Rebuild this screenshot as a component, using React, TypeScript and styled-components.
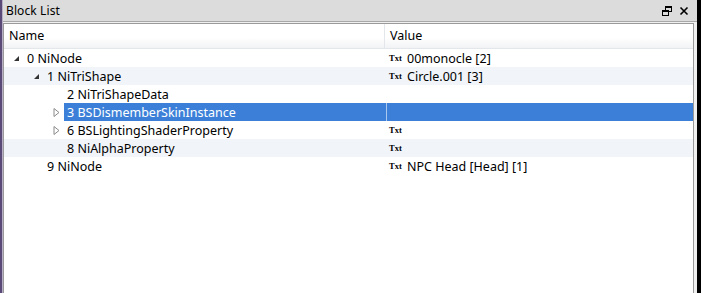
import React from "react";
import styled, { createGlobalStyle } from "styled-components";

const Global = createGlobalStyle`
  html, body { margin: 0; padding: 0; background: #fff; }
  body { font-family: "Noto Sans", "Liberation Sans", sans-serif; }
`;

const Frame = styled.div`
  width: 701px;
  height: 293px;
  display: flex;
  overflow: hidden;
  background: #f0f0f0;
`;

const LeftEdge = styled.div`
  width: 3px;
  flex: none;
  background: linear-gradient(to right, #5a4a78 0, #5a4a78 2px, #b9b0c8 2px);
`;

const RightEdge = styled.div`
  width: 4px;
  flex: none;
  background: #000;
`;

const Dock = styled.div`
  flex: 1;
  display: flex;
  flex-direction: column;
  min-width: 0;
`;

const TitleBar = styled.div`
  height: 21px;
  flex: none;
  display: flex;
  align-items: center;
  padding: 0 6px 0 3px;
  background: #dcdcdc;
  border-bottom: 1px solid #a8a8a8;
  font-size: 12px;
  color: #000;
`;

const Title = styled.span`
  flex: 1;
  letter-spacing: 0.1px;
`;

const TitleButton = styled.span`
  width: 14px;
  height: 14px;
  display: inline-flex;
  align-items: center;
  justify-content: center;
  margin-left: 3px;
`;

const Body = styled.div`
  flex: 1;
  display: flex;
  padding: 1px 3px 0 0;
`;

const Tree = styled.div`
  flex: 1;
  background: #fff;
  border: 1px solid #9a9a9a;
  border-bottom: none;
  display: flex;
  flex-direction: column;
`;

const HeaderRow = styled.div`
  height: 24px;
  display: grid;
  grid-template-columns: 381px 1fr;
  background: linear-gradient(#ffffff 0%, #ffffff 55%, #f2f3f5 100%);
  border-bottom: 1px solid #e3e6ea;
  font-size: 12.5px;
`;

const HeaderCell = styled.div<{ $last?: boolean }>`
  display: flex;
  align-items: center;
  padding-left: 5px;
  padding-bottom: 1px;
  border-right: ${(p) => (p.$last ? "none" : "1px solid #e3e6ea")};
`;

const Rows = styled.div``;

const Row = styled.div<{ $alt?: boolean }>`
  height: 18px;
  display: grid;
  grid-template-columns: 382px 1fr;
  background: ${(p) => (p.$alt ? "#f1f4f9" : "#fff")};
  font-size: 12.5px;
  color: #000;
`;

const NameCell = styled.div<{ $level: number }>`
  display: flex;
  align-items: center;
  padding-left: ${(p) => 6 + p.$level * 20}px;
  white-space: nowrap;
`;

const Expander = styled.span`
  width: 12px;
  height: 18px;
  flex: none;
  display: inline-flex;
  align-items: center;
  justify-content: center;
  margin-right: 2px;
`;

const Label = styled.span<{ $selected?: boolean }>`
  height: 18px;
  display: flex;
  align-items: center;
  padding-left: 3px;
  flex: 1;
  background: ${(p) => (p.$selected ? "#3b7fd8" : "transparent")};
  color: ${(p) => (p.$selected ? "#fff" : "#000")};
`;

const ValueCell = styled.div<{ $selected?: boolean }>`
  display: flex;
  align-items: center;
  padding-left: 3px;
  white-space: nowrap;
  background: ${(p) => (p.$selected ? "#3b7fd8" : "transparent")};
  box-shadow: ${(p) => (p.$selected ? "inset 1px 0 0 #a9c7ef" : "none")};
`;

const TxtTag = styled.span`
  font-family: "Liberation Serif", serif;
  font-weight: bold;
  font-size: 8.5px;
  width: 15px;
  margin-right: 3px;
  flex: none;
`;

const Expanded = () => (
  <svg width="7" height="7" viewBox="0 0 7 7">
    <polygon points="6,1 6,6 1,6" fill="#333" />
  </svg>
);

const Collapsed = () => (
  <svg width="7" height="9" viewBox="0 0 7 9">
    <polygon points="1,0.5 6,4.5 1,8.5" fill="none" stroke="#8a8a8a" strokeWidth="1" />
  </svg>
);

type Item = {
  level: number;
  name: string;
  value?: string;
  txt?: boolean;
  exp?: "open" | "closed";
  selected?: boolean;
};

const items: Item[] = [
  { level: 0, name: "0 NiNode", value: "00monocle [2]", txt: true, exp: "open" },
  { level: 1, name: "1 NiTriShape", value: "Circle.001 [3]", txt: true, exp: "open" },
  { level: 2, name: "2 NiTriShapeData" },
  { level: 2, name: "3 BSDismemberSkinInstance", exp: "closed", selected: true },
  { level: 2, name: "6 BSLightingShaderProperty", txt: true, exp: "closed" },
  { level: 2, name: "8 NiAlphaProperty", txt: true },
  { level: 1, name: "9 NiNode", value: "NPC Head [Head] [1]", txt: true },
];

export default function App() {
  return (
    <>
      <Global />
      <Frame>
        <LeftEdge />
        <Dock>
          <TitleBar>
            <Title>Block List</Title>
            <TitleButton>
              <svg width="10" height="10" viewBox="0 0 10 10">
                <rect x="3.5" y="0.5" width="6" height="5" fill="none" stroke="#000" />
                <rect x="3.5" y="0.5" width="6" height="1.5" fill="#000" />
                <rect x="0.5" y="4.5" width="6" height="5" fill="#dcdcdc" stroke="#000" />
                <rect x="0.5" y="4.5" width="6" height="1.5" fill="#000" />
              </svg>
            </TitleButton>
            <TitleButton>
              <svg width="10" height="10" viewBox="0 0 10 10">
                <path d="M1.5 1.5 L8.5 8.5 M8.5 1.5 L1.5 8.5" stroke="#000" strokeWidth="1.6" />
              </svg>
            </TitleButton>
          </TitleBar>
          <Body>
            <Tree>
              <HeaderRow>
                <HeaderCell>Name</HeaderCell>
                <HeaderCell $last>Value</HeaderCell>
              </HeaderRow>
              <Rows>
                {items.map((it, i) => (
                  <Row key={i} $alt={i % 2 === 1 && !it.selected}>
                    <NameCell $level={it.level}>
                      <Expander>
                        {it.exp === "open" ? <Expanded /> : it.exp === "closed" ? <Collapsed /> : null}
                      </Expander>
                      <Label $selected={it.selected}>{it.name}</Label>
                    </NameCell>
                    <ValueCell $selected={it.selected}>
                      {it.txt && <TxtTag>Txt</TxtTag>}
                      {it.value}
                    </ValueCell>
                  </Row>
                ))}
              </Rows>
            </Tree>
          </Body>
        </Dock>
        <RightEdge />
      </Frame>
    </>
  );
}
